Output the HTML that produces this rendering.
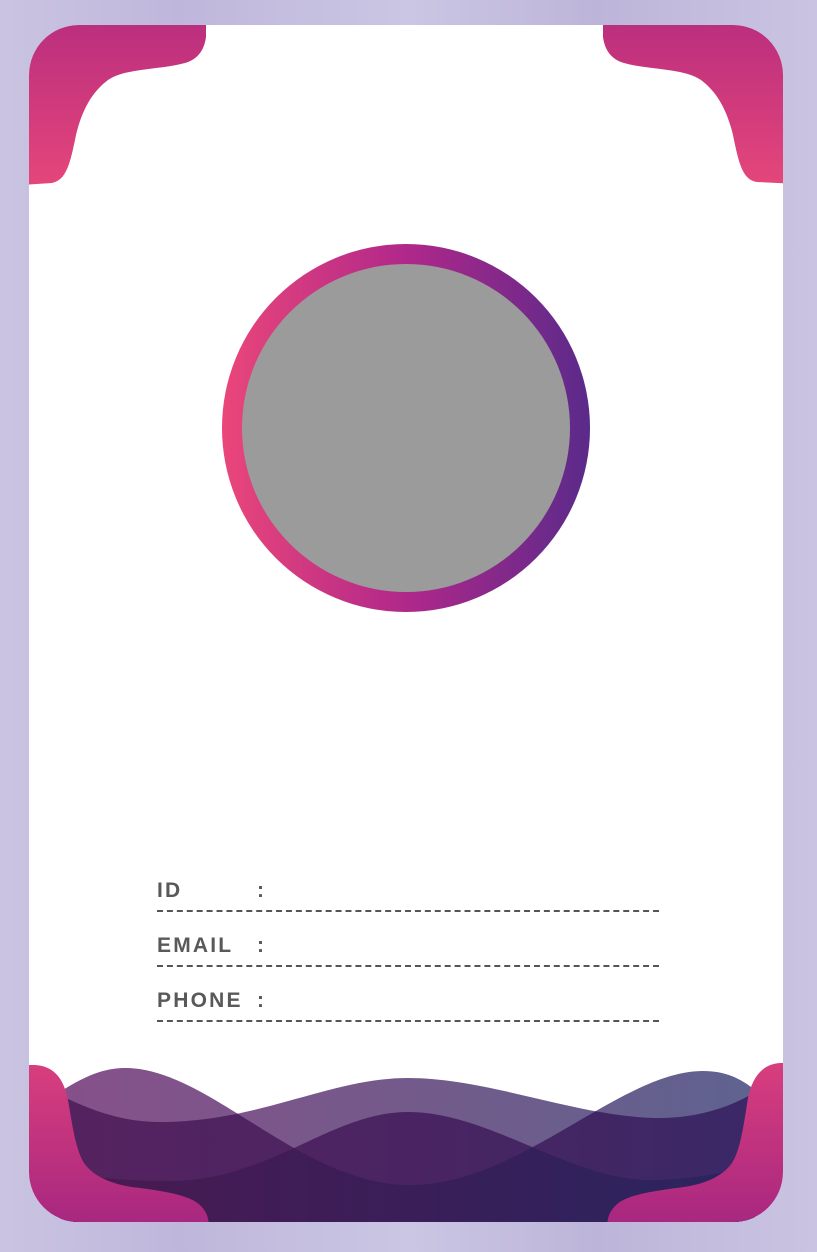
<!DOCTYPE html>
<html><head><meta charset="utf-8"><style>
html,body{margin:0;padding:0}
body{width:817px;height:1252px;overflow:hidden;background:linear-gradient(90deg,#cac4e2 0%,#bfb7db 22%,#cbc6e4 50%,#bdb5d9 73%,#cac4e2 100%);position:relative;font-family:"Liberation Sans",sans-serif}
.lbl{position:absolute;left:157px;font-weight:bold;font-size:21px;color:#595959;letter-spacing:2.2px}
.col{position:absolute;left:257px;font-weight:bold;font-size:21px;color:#595959}
.dl{position:absolute;left:157px;width:502px;border-top:2px dashed #555}
</style></head><body>
<svg width="817" height="1252" style="position:absolute;left:0;top:0">
<defs>
<clipPath id="card"><rect x="29" y="25" width="754" height="1197" rx="50" ry="50"/></clipPath>
<linearGradient id="pt" x1="0" y1="0" x2="0" y2="1"><stop offset="0" stop-color="#ba2e7e"/><stop offset="1" stop-color="#e4467a"/></linearGradient>
<linearGradient id="pb" x1="0" y1="0" x2="0" y2="1"><stop offset="0" stop-color="#d83e7d"/><stop offset="1" stop-color="#a62680"/></linearGradient>
<linearGradient id="ring" x1="0" y1="0" x2="1" y2="0"><stop offset="0" stop-color="#ea467a"/><stop offset=".5" stop-color="#b0288a"/><stop offset="1" stop-color="#5a2a8a"/></linearGradient>
<linearGradient id="lt" x1="0" y1="0" x2="1" y2="0"><stop offset="0" stop-color="#86508a"/><stop offset=".5" stop-color="#735a8a"/><stop offset="1" stop-color="#5f6290"/></linearGradient>
<linearGradient id="dk" x1="0" y1="0" x2="1" y2="0"><stop offset="0" stop-color="#55235f"/><stop offset=".5" stop-color="#4a2462"/><stop offset="1" stop-color="#3b2866"/></linearGradient>
<linearGradient id="dd" x1="0" y1="0" x2="1" y2="0"><stop offset="0" stop-color="#4a1a52"/><stop offset=".5" stop-color="#3a1e58"/><stop offset="1" stop-color="#2a2560"/></linearGradient>
<path id="A" d="M60,1092 C90,1072 110,1068 125,1068 C210,1068 300,1185 410,1185 C520,1185 620,1071 703,1071 C725,1071 740,1078 755,1090 L755,1230 L60,1230 Z"/>
<path id="B" d="M60,1095 C100,1115 130,1122 160,1122 C260,1122 330,1078 408,1078 C490,1078 580,1118 660,1118 C700,1118 735,1105 755,1092 L755,1230 L60,1230 Z"/>
<path id="C" d="M60,1172 C110,1180 140,1181 170,1181 C270,1181 330,1112 408,1112 C490,1112 570,1180 650,1180 C690,1180 730,1172 755,1165 L755,1230 L60,1230 Z"/>
<clipPath id="cA"><use href="#A"/></clipPath>
<clipPath id="cB"><use href="#B"/></clipPath>
</defs>
<g clip-path="url(#card)">
<rect x="0" y="0" width="817" height="1252" fill="#fff"/>
<use href="#A" fill="url(#lt)"/>
<use href="#B" fill="url(#lt)"/>
<g clip-path="url(#cA)"><use href="#B" fill="url(#dk)"/><use href="#C" fill="url(#dk)"/></g>
<g clip-path="url(#cB)"><use href="#C" fill="url(#dk)"/></g>
<g clip-path="url(#cA)"><g clip-path="url(#cB)"><use href="#C" fill="url(#dd)"/></g></g>
<path d="M20,20 L206,20 L206,37 C204,52 196,60 185,63 C160,70 125,68 108,80 C92,92 82,110 76,135 C70,165 66,180 52,183 L20,185 Z" fill="url(#pt)"/>
<path d="M800,20 L603,20 L603,37 C605,52 613,60 624,63 C649,70 684,68 701,80 C717,92 727,110 733,135 C739,165 743,180 757,182 L800,184 Z" fill="url(#pt)"/>
<path d="M20,1065 L35,1065 C55,1066 64,1080 68,1100 C73,1130 76,1150 84,1163 C96,1180 120,1186 140,1188 C170,1192 190,1196 200,1205 C207,1212 209,1218 209,1230 L20,1230 Z" fill="url(#pb)"/>
<path d="M800,1063 L780,1063 C762,1064 752,1078 748,1098 C743,1130 740,1150 732,1163 C720,1180 696,1186 676,1188 C646,1192 626,1196 616,1205 C609,1212 607,1218 607,1230 L800,1230 Z" fill="url(#pb)"/>
</g>
<circle cx="406" cy="428" r="184" fill="url(#ring)"/>
<circle cx="406" cy="428" r="164" fill="#9b9b9b"/>
</svg>
<div class="lbl" style="top:879px">ID</div><div class="col" style="top:879px">:</div>
<div class="dl" style="top:910px"></div>
<div class="lbl" style="top:934px">EMAIL</div><div class="col" style="top:934px">:</div>
<div class="dl" style="top:965px"></div>
<div class="lbl" style="top:989px">PHONE</div><div class="col" style="top:989px">:</div>
<div class="dl" style="top:1020px"></div>
</body></html>
